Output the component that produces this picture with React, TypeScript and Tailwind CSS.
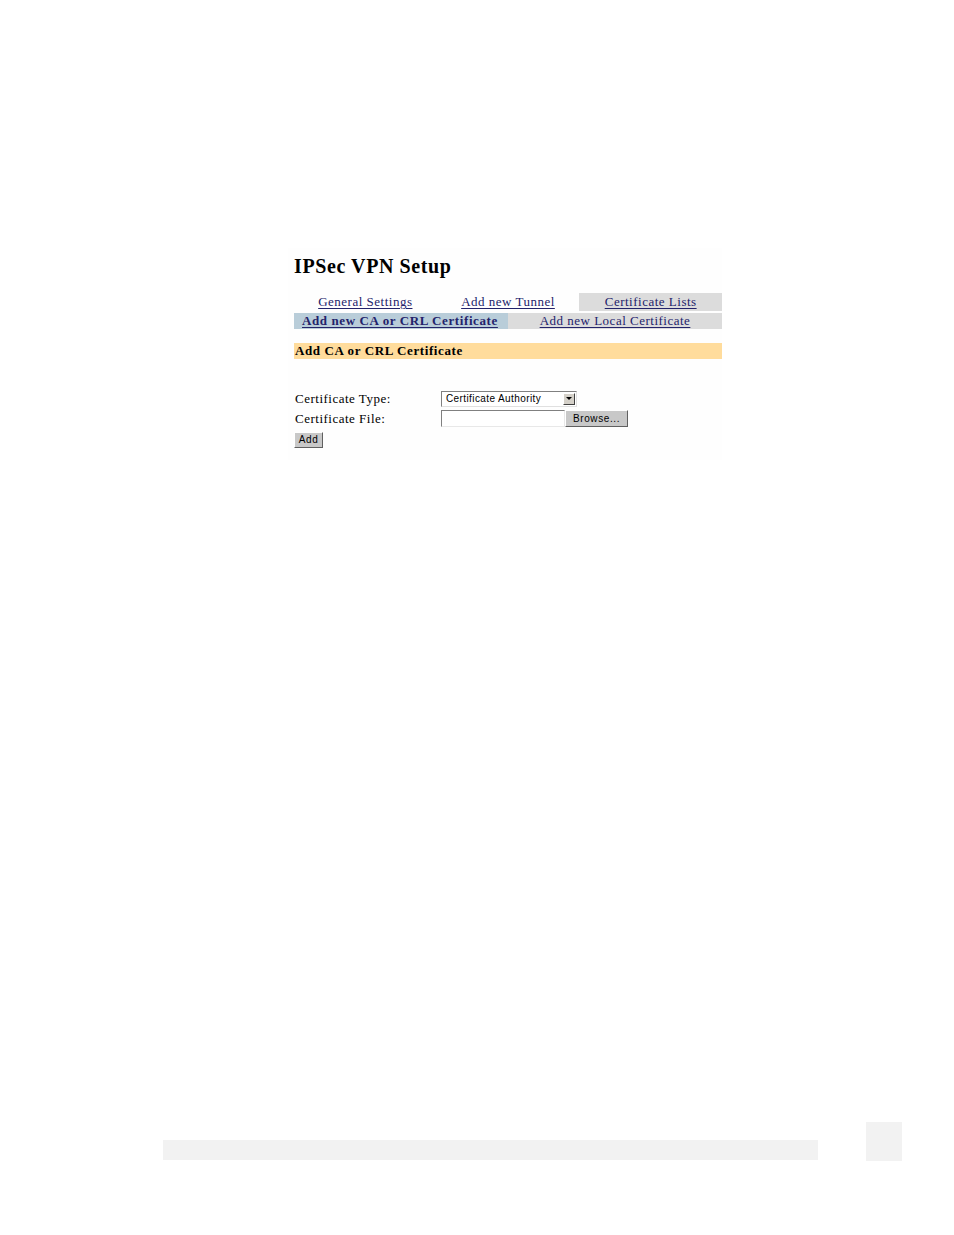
const serif = "font-['Liberation_Serif','Times_New_Roman',serif]";
const sans = "font-['Liberation_Sans',Arial,sans-serif]";

const linkCls = "text-[#23236b] underline underline-offset-2 decoration-1";

export default function App() {
  return (
    <div className={`w-[954px] h-[1235px] bg-white flex flex-col ${serif}`}>
      <div className="h-[248px] shrink-0" />
      <div className="ml-[288px] w-[434px] h-[212px] bg-[#fefefe] pl-[6px] flex flex-col">
        <h1 className="mt-[6px] h-[24px] text-[20px] leading-[24px] font-bold text-black tracking-[0.6px]">IPSec VPN Setup</h1>

        <div className="mt-[15px] grid grid-cols-3 h-[18px] text-[13px] leading-[18px] tracking-[0.5px]">
          <div className="text-center"><a className={linkCls}>General Settings</a></div>
          <div className="text-center"><a className={linkCls}>Add new Tunnel</a></div>
          <div className="text-center bg-[#dcdcdc]"><a className={linkCls}>Certificate Lists</a></div>
        </div>
        <div className="mt-[2px] grid grid-cols-2 h-[16px] text-[13px] leading-[16px] tracking-[0.5px]">
          <div className="bg-[#b9cdd9] pl-[8px] font-bold tracking-[0.6px]"><a className={linkCls}>Add new CA or CRL Certificate</a></div>
          <div className="bg-[#dcdcdc] text-center"><a className={linkCls}>Add new Local Certificate</a></div>
        </div>

        <div className="mt-[14px] h-[16px] bg-[#ffdc9c] pl-[1px] text-[13px] leading-[16px] font-bold text-black tracking-[0.6px]">
          Add CA or CRL Certificate
        </div>

        <div className="mt-[32px] flex flex-col text-[13px] text-black tracking-[0.5px]">
          <div className="flex items-center h-[16px]">
            <span className="w-[147px] pl-[1px]">Certificate Type:</span>
            <div className={`w-[136px] h-[16px] flex items-center border border-t-[#808080] border-l-[#808080] border-r-[#e0e0e0] border-b-[#e0e0e0] bg-white ${sans} text-[10px] tracking-[0.4px]`}>
              <span className="flex-1 pl-[4px] leading-[14px]">Certificate Authority</span>
              <span className="w-[12px] h-[12px] mr-[1px] bg-[#d4d0c8] border border-t-white border-l-white border-r-[#404040] border-b-[#404040] flex items-center justify-center">
                <svg width="6" height="4" viewBox="0 0 6 4"><path d="M0 0h6L3 3z" fill="#000" /></svg>
              </span>
            </div>
          </div>
          <div className="mt-[3px] flex items-center h-[17px]">
            <span className="w-[147px] pl-[1px]">Certificate File:</span>
            <div className="w-[124px] h-[17px] border border-t-[#808080] border-l-[#808080] border-r-[#e8e8e8] border-b-[#e8e8e8] bg-white" />
            <button className={`w-[63px] h-[17px] bg-[#c8c8c8] border border-t-white border-l-white border-r-[#606060] border-b-[#606060] ${sans} text-[10px] tracking-[0.6px] leading-[14px]`}>Browse...</button>
          </div>
          <div className="mt-[2px]">
            <button className={`w-[29px] h-[16px] bg-[#c8c8c8] border border-t-white border-l-white border-r-[#606060] border-b-[#606060] ${sans} text-[10px] tracking-[0.6px] leading-[13px]`}>Add</button>
          </div>
        </div>
      </div>

      <div className="mt-[662px] ml-[163px] flex items-end gap-[48px]">
        <div className="w-[655px] h-[20px] mb-[1px] bg-[#f2f2f2]" />
        <div className="w-[36px] h-[39px] bg-[#f2f2f2]" />
      </div>
    </div>
  );
}
